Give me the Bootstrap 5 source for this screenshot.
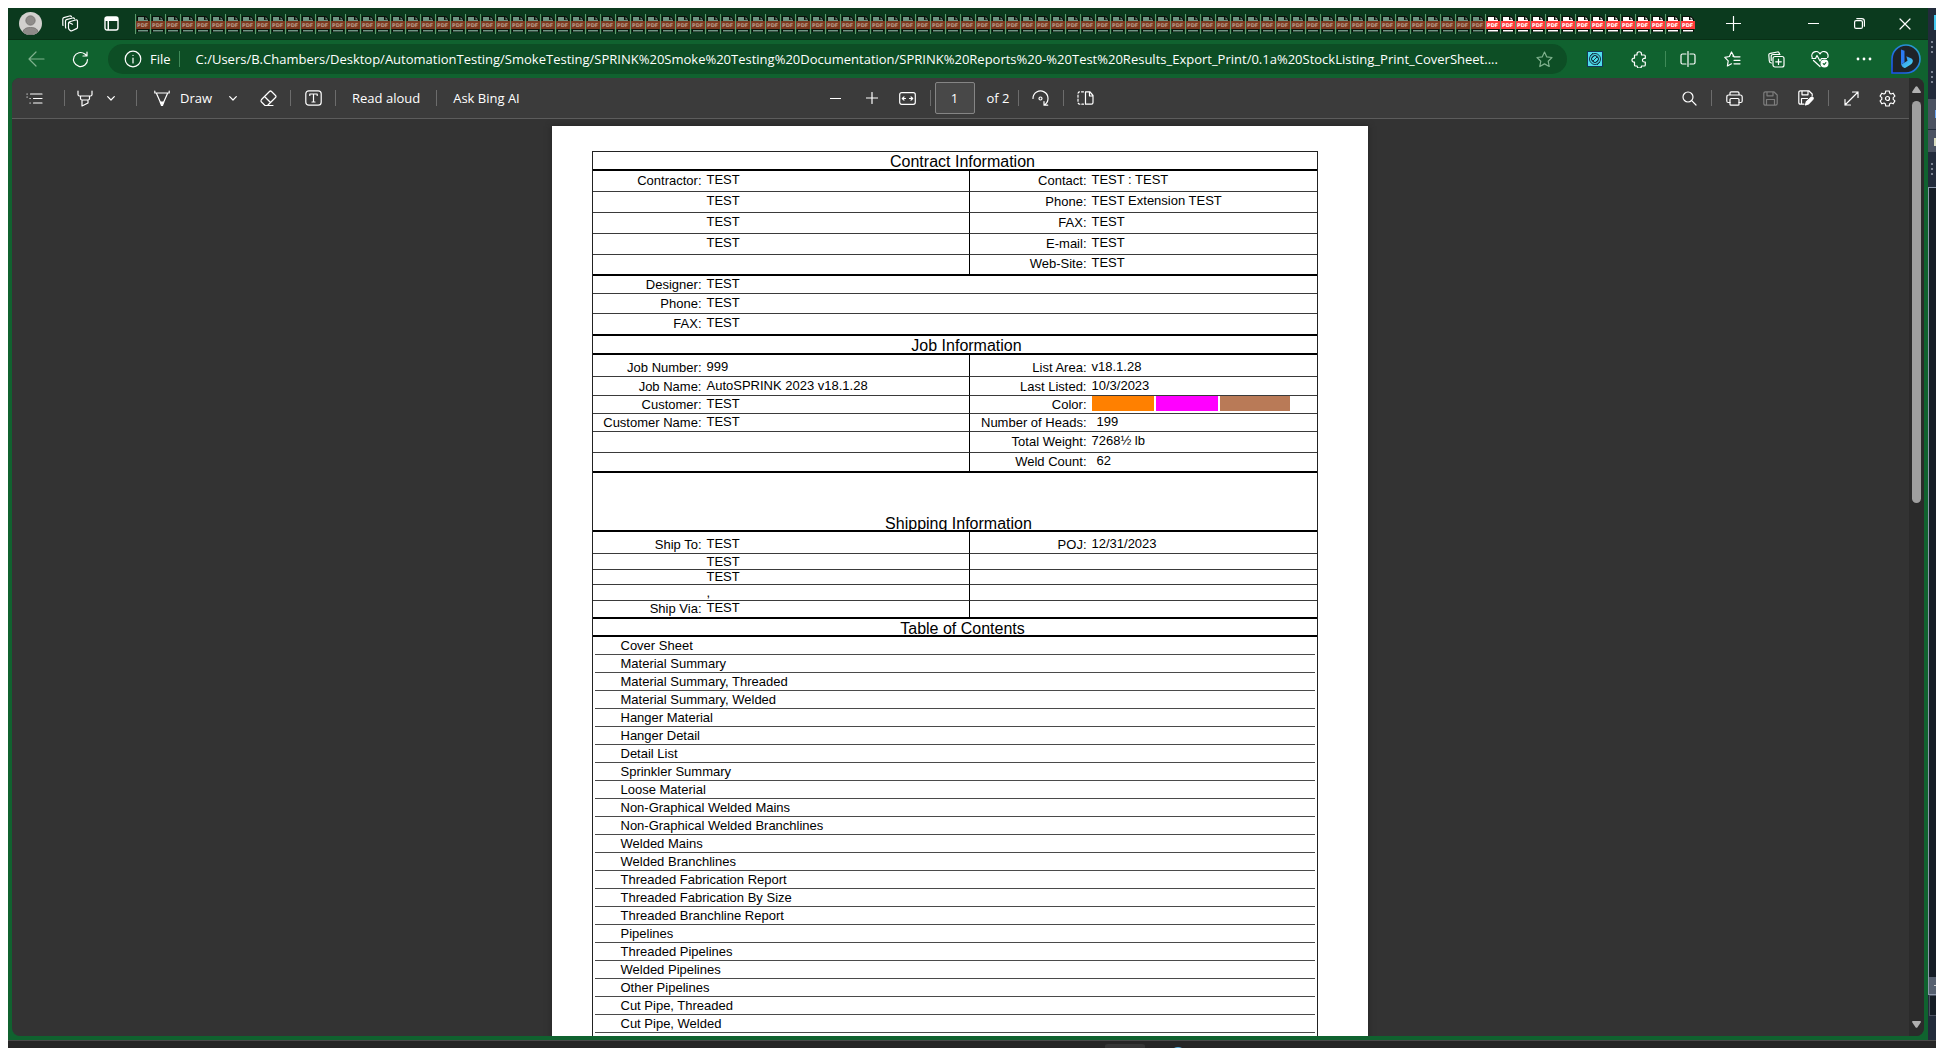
<!DOCTYPE html>
<html lang="en">
<head>
<meta charset="utf-8">
<meta name="viewport" content="width=device-width, initial-scale=1">
<title>StockListing_Print_CoverSheet.pdf</title>
<link href="https://cdn.jsdelivr.net/npm/bootstrap@5.3.0/dist/css/bootstrap.min.css" rel="stylesheet">
<style>
body{background:#fff;font-family:"Open Sans","Noto Sans",sans-serif;font-size:13px;line-height:20px;color:#fff}
button{background:none;border:0;padding:0;color:inherit}
svg{display:block;flex:none}
.ico{fill:none;stroke:currentColor;stroke-width:1.2;stroke-linecap:round;stroke-linejoin:round}
.desk{padding:8px 0 0 8px}
.mainrow,.view,.canvas{min-height:0}
.browser{background:#10622f;min-width:0}
.tabstrip{height:32px;background:#0b3a1e;border-bottom:1px solid #083016}
.w26,.w36,.w40,.w44,.w46,.w76{display:flex;align-items:center;justify-content:center;flex:none;height:100%}
.w26{width:26px}.w36{width:36px}.w40{width:40px}.w44{width:44px}.w46{width:46px}.w76{width:76px}
.tabs{height:20px;padding-left:1px}
.pdftab{width:15px;height:20px;border-left:1px solid #5f9a6c;--sheet:#6f9684;--band:#7a3820;--ink:#b99a88;flex:none}
.pdftab.live{--sheet:#fff;--band:#ff3b3b;--ink:#fff}
.pdftab text{font:bold 5px "DejaVu Sans",sans-serif;fill:var(--ink)}
.navrow{height:38px;padding:0 2px 0 6px}
.pill{height:30px;border-radius:15px;background:#0d4e25;margin:0 6px;min-width:0}
.addr{background:none;border:0;outline:0;color:#fff;font-size:13px;padding:0;min-width:0;text-overflow:ellipsis}
.bar{width:1px;height:16px;background:#3f8a58;flex:none}
.dim{color:#7fb18d}
.faded{color:#7d7d7d}
.view{margin:0 4px 4px;border-radius:8px;background:#333}
.pane{min-width:0}
.tools{height:41px;background:#3b3b3b;border-bottom:1px solid #5c5c5c}
.sep{width:9px;flex:none;display:flex;justify-content:center}
.sep::before{content:"";width:1px;height:16px;background:#6c6c6c}
.wide{width:16px}
.txtbtn{padding:0 12px;height:100%;white-space:nowrap}
.side{flex:1 1 0;min-width:0}
.pgno{width:40px;height:32px;background:#484848;border:1px solid #858585;border-radius:2px;color:#fff;text-align:center;padding:0}
.scroll{width:15px;background:#2b2b2b;padding:8px 0}
.thumb{width:9px;height:402px;border-radius:5px;background:#9f9f9f;margin-top:8px}
.canvas{padding:7px 2px 0 0}
.sheet{width:816px;max-width:100%;min-height:1056px;background:#fff;color:#000;padding:25px 50px 0 40px;font-family:"Liberation Sans",sans-serif;font-size:13px;line-height:12px;flex:none;box-shadow:0 0 6px #222}
.frame{border:1px solid #222;border-bottom:0;min-height:1000px}
.sheet h2{font-size:16px;line-height:19px;font-weight:400;text-align:center;margin:0;border-bottom:2px solid #000;height:19px}
.sheet h2.gaptop{height:59px;padding-top:41px}
.sheet h2.tocpad{height:18px}
.form{width:100%;table-layout:fixed;border-collapse:separate;border-spacing:0}
.form th,.form td{padding:0;vertical-align:bottom;border-bottom:1px solid #3a3a3a;font-weight:400;white-space:nowrap}
.form th{text-align:right;padding:0 3px var(--drop) 0}
.form td{padding:0 0 calc(var(--drop) + 1px) 2px}
.form td.cut{border-right:1px solid #000}
.form td.num{padding-left:7px}
.form tr:last-child>*{border-bottom:2px solid #000}
.c1{width:112px}.c2{width:265px}.c3{width:120px}
.r15{height:15px;--drop:0px}.r16{height:16px;--drop:0px}.r18{height:18px;--drop:2px}.r19{height:19px;--drop:2px}
.r20{height:20px;--drop:3px}.r21{height:21px;--drop:4px}.r22{height:22px;--drop:2px}.high{--drop:4px}
.form .colors{padding-bottom:2px;line-height:0}
.swatches{gap:2px}
.sw{height:15px;width:62px}
.sw.last{width:70px}
.toc{list-style:none;margin:0 2px;padding:0}
.toc li{height:18px;border-bottom:1px solid #4a4a4a;padding:2px 0 0 26px;line-height:13px}
.strip{width:8px;background:#222b3b}
.task{height:8px;background:#262626;border-top:1px solid #4a4a4a}
</style>
</head>
<body>
<div class="desk vh-100 d-flex flex-column overflow-hidden">
<div class="mainrow d-flex flex-grow-1">
<main class="browser d-flex flex-column flex-grow-1">
  <header class="tabstrip d-flex align-items-center flex-shrink-0">
    <button class="w44" aria-label="Profile"><svg width="23" height="23" viewBox="0 0 23 23"><defs><clipPath id="av"><circle cx="11.5" cy="11.5" r="11.5"/></clipPath></defs><g clip-path="url(#av)"><rect width="23" height="23" fill="#d2d0ce"/><circle cx="11.5" cy="8.5" r="4.7" fill="#8e8b89" stroke="#6f6c6a" stroke-width=".7"/><path d="M3.5 23c0-6 3-7.500 8-7.500s8 1.500 8 7.500z" fill="#8e8b89" stroke="#6f6c6a" stroke-width=".7"/></g></svg></button>
    <button class="w36" aria-label="Workspaces"><svg class="ico" width="17" height="17" viewBox="0 0 17 17"><path d="M6.500 8.200Q6.500 7 7.500 6.700L13.500 5q1.800-.4 2 1.200v6q0 1-1 1.400l-4.500 2.200q-1 .4-1.800-.3-1.700-1.300-1.700-2.500zM7 7.500l3.500 1.700M3.800 13Q3.500 12.500 3.500 11.500V6q0-1 1-1.400L10.500 3q1.500-.3 2 .8M1 10.500Q.8 10 .8 9V4q0-1 1-1.400L7.500 1q1.500-.3 2 .6"/></svg></button>
    <button class="w46" aria-label="Tab actions"><svg width="15" height="15" viewBox="0 0 15 15"><rect x="1" y="1" width="13" height="13" rx="2" fill="none" stroke="#fff" stroke-width="1.4"/><path d="M1 2.500Q1 1 2.500 1h10Q14 1 14 2.500V5H5v9H3.500V5H1z" fill="#fff"/></svg></button>
    <div class="tabs d-flex" id="tabs" role="tablist"></div>
    <button class="w76" aria-label="New tab"><svg class="ico" width="15" height="15" viewBox="0 0 15 15"><path d="M7.500 .5v14M.5 7.500h14"/></svg></button>
    <div class="d-flex h-100 ms-auto">
      <button class="w46" aria-label="Minimize"><svg class="ico" width="11" height="11" viewBox="0 0 11 11"><path d="M.5 5.500h10"/></svg></button>
      <button class="w46" aria-label="Restore"><svg class="ico" width="11" height="11" viewBox="0 0 11 11"><rect x=".6" y="2.600" width="7.800" height="7.800" rx="1.500"/><path d="M2.800 .6h5q2.600 0 2.600 2.600v5"/></svg></button>
      <button class="w46" aria-label="Close"><svg class="ico" width="12" height="12" viewBox="0 0 12 12"><path d="M1 1l10 10M11 1 1 11"/></svg></button>
    </div>
  </header>
  <nav class="navrow d-flex align-items-center flex-shrink-0" aria-label="Address bar">
    <button class="w44 dim" aria-label="Back"><svg class="ico" width="17" height="16" viewBox="0 0 17 16"><path d="M16 8H1M8 1 1 8l7 7"/></svg></button>
    <button class="w44" aria-label="Refresh"><svg class="ico" width="17" height="17" viewBox="0 0 17 17"><path d="M15.500 8.500A7 7 0 1 1 12.800 3L15 4.800M15 1v4h-4"/></svg></button>
    <div class="pill d-flex align-items-center flex-grow-1">
      <svg class="ico ms-3 me-2" width="18" height="18" viewBox="0 0 18 18"><circle cx="9" cy="9" r="7.800"/><path d="M9 8v5M9 5.300v.2"/></svg>
      <label for="addr">File</label>
      <span class="bar ms-2 me-2"></span>
      <input id="addr" class="addr flex-grow-1 ms-1 ps-1" value="C:/Users/B.Chambers/Desktop/AutomationTesting/SmokeTesting/SPRINK%20Smoke%20Testing%20Documentation/SPRINK%20Reports%20-%20Test%20Results_Export_Print/0.1a%20StockListing_Print_CoverSheet....">
      <button class="w46 dim" aria-label="Add to favorites"><svg class="ico" width="17" height="17" viewBox="0 0 17 17"><path d="M8.500 1l2.300 4.900 5.200.6-3.800 3.700 1 5.300-4.700-2.600-4.700 2.600 1-5.300L1 6.500l5.200-.6z"/></svg></button>
    </div>
    <button class="w44" aria-label="Extension"><svg width="16" height="16" viewBox="0 0 16 16"><rect x=".5" y=".5" width="15" height="15" fill="#4fdcec" stroke="#123a5a"/><g fill="none" stroke="#14384a"><circle cx="8" cy="8" r="5.500"/><circle cx="8" cy="8" r="3.500"/><path d="M4 8l4-4 4 4-4 4zM6 10l4-4M3 5l3-3M10 14l3-3"/></g></svg></button>
    <button class="w44" aria-label="Extensions"><svg class="ico" width="16" height="17" viewBox="0 0 16 17"><path d="M3.500 4H6V3a2 2 0 0 1 4.500 0v1h2.800q1 0 1 1v2.300h-1a1.700 1.700 0 0 0 0 3.700h1v3q0 1-1 1h-2.800a2 2 0 0 1-4.400 0H4.500q-1 0-1-1v-2.800H3a2 2 0 0 1 0-4h.5z"/></svg></button>
    <span class="bar ms-1"></span>
    <button class="w44" aria-label="Split screen"><svg class="ico" width="16" height="16" viewBox="0 0 16 16"><path d="M8 .5v15M6 3H2.500Q1 3 1 4.500v7Q1 13 2.500 13H6M10 3h3.500Q15 3 15 4.500v7q0 1.500-1.500 1.500H10"/></svg></button>
    <button class="w44" aria-label="Favorites"><svg class="ico" width="17" height="17" viewBox="0 0 17 17"><path d="M10 5.500 7.500 1 5.400 5.500.8 6.300l3.400 3.500-.8 5.200 4.100-2.200M10 5.800h6M10 9.300h6M10 12.800h6M10 5.800 8.800 5"/></svg></button>
    <button class="w44" aria-label="Collections"><svg class="ico" width="17" height="17" viewBox="0 0 17 17"><rect x="5" y="5.500" width="11" height="10.500" rx="2"/><path d="M10.500 8v5.500M7.700 10.800h5.600M3.500 12Q1.500 12 1.300 10L.8 4Q.7 2.500 2.300 2.300L9.500 1Q11 .8 11.300 2.300l.3 1M3.200 9.500V5.500q0-2 2-2H12"/></svg></button>
    <button class="w44" aria-label="Browser essentials"><svg class="ico" width="18" height="17" viewBox="0 0 18 17"><path d="M1.200 6.500A4 4 0 0 1 9 3a4 4 0 0 1 7.700 3.500M2.500 9.500 9 15.500M1 7.500h3.500L6 4.500l3 5.500 1.500-2.500h5"/><circle cx="13.500" cy="12.500" r="3.400" fill="#fff"/><path d="M12.200 12.600l1 1 1.700-2" stroke="#10622f"/></svg></button>
    <button class="w44" aria-label="Settings and more"><svg width="16" height="4" viewBox="0 0 16 4" fill="#fff"><circle cx="2" cy="2" r="1.400"/><circle cx="8" cy="2" r="1.400"/><circle cx="14" cy="2" r="1.400"/></svg></button>
    <button class="w40" aria-label="Bing"><svg width="30" height="30" viewBox="0 0 30 30"><defs><linearGradient id="bg" x1="0" y1="1" x2="1" y2="0"><stop offset="0" stop-color="#1b4ff0"/><stop offset="1" stop-color="#2aa7c9"/></linearGradient><linearGradient id="bb" x1="0" y1="0" x2="1" y2="1"><stop offset="0" stop-color="#2b7bf3"/><stop offset="1" stop-color="#4fe3ee"/></linearGradient></defs><path d="M1 29V15A14 14 0 1 1 15 29z" fill="#1f2328" stroke="url(#bg)" stroke-width="1.600"/><path d="M10 5.500l3.500 1.300v11.500L10 20.500z" fill="#2b7bf3"/><path d="M10 20.500l4-2.300 2.500-1.400-1.200-4.600 5.200 2.200q2 1 1.200 3.700-.8 2-2.700 3l-4.500 2.700q-2.500 1-4.500-3.300z" fill="url(#bb)"/></svg></button>
  </nav>
  <section class="view d-flex flex-grow-1 overflow-hidden">
    <div class="pane d-flex flex-column flex-grow-1">
      <div class="tools d-flex align-items-center flex-shrink-0" role="toolbar" aria-label="PDF tools">
        <div class="side d-flex align-items-center h-100">
          <button class="w44" aria-label="Contents"><svg class="ico" width="17" height="13" viewBox="0 0 17 13"><path d="M4.500 2H16M7.500 6.500H16M7.500 11H16M1 2h.2M1 5h.2M4 6.500h.2M4 11h.2"/></svg></button>
          <span class="sep wide"></span>
          <button class="w26" aria-label="Highlight"><svg class="ico" width="16" height="17" viewBox="0 0 16 17"><path d="M1 1v3.500Q1 6 2.500 6h11Q15 6 15 4.500V1M3.500 6v2.500q0 1.500 1.500 1.500h6q1.500 0 1.500-1.500V6M5 10v6l6-3v-3"/></svg></button>
          <button class="w26" aria-label="Highlight options"><svg class="ico" width="8" height="5" viewBox="0 0 8 5"><path d="M.7.7 4 4 7.300.7"/></svg></button>
          <span class="sep wide ms-1"></span>
          <button class="w36" aria-label="Pen"><svg class="ico" width="16" height="17" viewBox="0 0 16 17"><path d="M.8 1v2h14.400V1M2.500 3.500 6.700 13M13.500 3.500 9.300 13"/><path d="M6.300 12h3.400L8.500 15.500h-1z" fill="#fff"/></svg></button>
          <button class="ps-0 pe-2 h-100">Draw</button>
          <button class="w26" aria-label="Draw options"><svg class="ico" width="8" height="5" viewBox="0 0 8 5"><path d="M.7.7 4 4 7.300.7"/></svg></button>
          <button class="w36 ms-1" aria-label="Erase"><svg class="ico" width="17" height="17" viewBox="0 0 17 17"><path d="M1.500 9.500 9.500 1.500q1-1 2 0l4 4q1 1 0 2l-8 8H5l-3.500-3.500q-1-1 0-2.500zM4.500 6.500l6 6M7.500 15.500H13"/></svg></button>
          <span class="sep"></span>
          <button class="w36" aria-label="Add text"><svg class="ico" width="17" height="16" viewBox="0 0 17 16"><rect x=".8" y=".8" width="15.400" height="14.400" rx="3"/><path d="M4.800 5.500V4h7.400v1.500M8.500 4v8M7 12h3"/></svg></button>
          <span class="sep"></span>
          <button class="txtbtn">Read aloud</button>
          <span class="sep"></span>
          <button class="txtbtn">Ask Bing AI</button>
        </div>
        <div class="d-flex align-items-center h-100 ps-1">
          <button class="w36" aria-label="Zoom out"><svg class="ico" width="11" height="11" viewBox="0 0 11 11"><path d="M.5 5.500h10"/></svg></button>
          <button class="w36" aria-label="Zoom in"><svg class="ico" width="12" height="12" viewBox="0 0 12 12"><path d="M6 .5v11M.5 6h11"/></svg></button>
          <button class="w36" aria-label="Fit to width"><svg class="ico" width="17" height="13" viewBox="0 0 17 13"><rect x=".7" y=".7" width="15.600" height="11.600" rx="2"/><path d="M3.500 6.500h3M13.500 6.500h-3M5 4.800 3.300 6.500 5 8.200M12 4.800l1.700 1.700L12 8.200"/></svg></button>
          <span class="sep"></span>
          <input class="pgno" id="pg" value="1"><label for="pg" class="ps-2 ms-1">of 2</label>
          <span class="sep ms-1"></span>
          <button class="w36" aria-label="Rotate"><svg class="ico" width="17" height="17" viewBox="0 0 17 17"><path d="M1 8.500A7.500 7.500 0 1 1 12.500 14.800M12 11.500v3.700h3.700"/><circle cx="8.500" cy="8.500" r="1.500"/></svg></button>
          <span class="sep"></span>
          <button class="w36" aria-label="Page view"><svg class="ico" width="17" height="14" viewBox="0 0 17 14"><path d="M8.500.8H13L16 4.500v7q0 1.700-1.500 1.700H8.500zM12.500 1v4H16"/><path d="M6.500.8H3Q1 .8 1 3v8q0 2.200 2 2.200h3.500" stroke-dasharray="2 2"/></svg></button>
        </div>
        <div class="side d-flex align-items-center justify-content-end h-100 pe-1">
          <button class="w36" aria-label="Search"><svg class="ico" width="15" height="15" viewBox="0 0 15 15"><circle cx="6" cy="6" r="5"/><path d="M9.700 9.700 14 14"/></svg></button>
          <span class="sep"></span>
          <button class="w36" aria-label="Print"><svg class="ico" width="17" height="15" viewBox="0 0 17 15"><path d="M4 4V2Q4 .8 5.200.8h6.600Q13 .8 13 2v2M4 11.500H2.300Q.8 11.500.8 10V6q0-2 2-2h11.400q2 0 2 2v4q0 1.500-1.500 1.500H13"/><rect x="4" y="7.500" width="9" height="6.700" rx="1"/></svg></button>
          <button class="w36 faded" aria-label="Save"><svg class="ico" width="15" height="15" viewBox="0 0 15 15"><path d="M2.500.8h8.300L14.200 4v8.500q0 1.700-1.700 1.700h-10Q.8 14.200.8 12.500v-10Q.8.8 2.500.8zM4 .8v4h6v-4M3.500 14V8.500h8V14"/></svg></button>
          <button class="w36" aria-label="Save as"><svg class="ico" width="16" height="16" viewBox="0 0 16 16"><path d="M6 14.200H2.500Q.8 14.200.8 12.500v-10Q.8.8 2.500.8h8.300L14.200 4v2M4 .8v4h6v-4M3.500 14V8.500h6"/><path d="M7.500 15l.8-3L13 7.500q1-.8 1.800 0t0 1.800L10.300 14z" fill="#fff"/></svg></button>
          <span class="sep"></span>
          <button class="w36" aria-label="Full screen"><svg class="ico" width="15" height="15" viewBox="0 0 15 15"><path d="M1 14 14 1M8.500 1H14v5.500M1 8.500V14h5.500"/></svg></button>
          <button class="w36" aria-label="Settings"><svg class="ico" width="17" height="17" viewBox="0 0 17 17"><path d="M6.800 1h3.400l.5 2.200 1.300.8 2.200-.8 1.700 2.900-1.700 1.500v1.800l1.700 1.500-1.700 2.900-2.200-.8-1.300.8-.5 2.200H6.800l-.5-2.200-1.300-.8-2.200.8-1.700-2.900 1.700-1.500V7.600L1.100 6.100l1.700-2.900L5 4l1.300-.8z"/><circle cx="8.500" cy="8.500" r="2"/></svg></button>
        </div>
      </div>
      <div class="canvas d-flex justify-content-center flex-grow-1 overflow-hidden">
        <article class="sheet"><div class="frame">
          <h2 class="ps-3">Contract Information</h2>
          <table class="form" aria-label="Contract Information">
            <colgroup><col class="c1"><col class="c2"><col class="c3"><col></colgroup>
            <tr class="r21"><th>Contractor:</th><td class="cut">TEST</td><th>Contact:</th><td>TEST : TEST</td></tr>
            <tr class="r21"><th></th><td class="cut">TEST</td><th>Phone:</th><td>TEST Extension TEST</td></tr>
            <tr class="r21"><th></th><td class="cut">TEST</td><th>FAX:</th><td>TEST</td></tr>
            <tr class="r21"><th></th><td class="cut">TEST</td><th>E-mail:</th><td>TEST</td></tr>
            <tr class="r21"><th></th><td class="cut"></td><th>Web-Site:</th><td>TEST</td></tr>
          </table>
          <table class="form" aria-label="Designer">
            <colgroup><col class="c1"><col></colgroup>
            <tr class="r18"><th>Designer:</th><td>TEST</td></tr>
            <tr class="r20"><th>Phone:</th><td>TEST</td></tr>
            <tr class="r22 high"><th>FAX:</th><td>TEST</td></tr>
          </table>
          <h2 class="ps-4">Job Information</h2>
          <table class="form" aria-label="Job Information">
            <colgroup><col class="c1"><col class="c2"><col class="c3"><col></colgroup>
            <tr class="r22"><th>Job Number:</th><td class="cut">999</td><th>List Area:</th><td>v18.1.28</td></tr>
            <tr class="r19"><th>Job Name:</th><td class="cut">AutoSPRINK 2023 v18.1.28</td><th>Last Listed:</th><td>10/3/2023</td></tr>
            <tr class="r18"><th>Customer:</th><td class="cut">TEST</td><th>Color:</th><td class="colors"><span class="swatches d-flex"><span class="sw" style="background:#ff8000"></span><span class="sw" style="background:#f0f"></span><span class="sw last" style="background:#b97a57"></span></span></td></tr>
            <tr class="r18"><th>Customer Name:</th><td class="cut">TEST</td><th>Number of Heads:</th><td class="num">199</td></tr>
            <tr class="r21"><th></th><td class="cut"></td><th>Total Weight:</th><td>7268½ lb</td></tr>
            <tr class="r20"><th></th><td class="cut"></td><th>Weld Count:</th><td class="num">62</td></tr>
          </table>
          <h2 class="gaptop ps-2">Shipping Information</h2>
          <table class="form" aria-label="Shipping Information">
            <colgroup><col class="c1"><col class="c2"><col class="c3"><col></colgroup>
            <tr class="r22"><th>Ship To:</th><td class="cut">TEST</td><th>POJ:</th><td>12/31/2023</td></tr>
            <tr class="r16"><th></th><td class="cut">TEST</td><th></th><td></td></tr>
            <tr class="r15"><th></th><td class="cut">TEST</td><th></th><td></td></tr>
            <tr class="r16"><th></th><td class="cut">,</td><th></th><td></td></tr>
            <tr class="r18"><th>Ship Via:</th><td class="cut">TEST</td><th></th><td></td></tr>
          </table>
          <h2 class="tocpad ps-3">Table of Contents</h2>
          <ul class="toc">
            <li>Cover Sheet</li><li>Material Summary</li><li>Material Summary, Threaded</li><li>Material Summary, Welded</li><li>Hanger Material</li><li>Hanger Detail</li><li>Detail List</li><li>Sprinkler Summary</li><li>Loose Material</li><li>Non-Graphical Welded Mains</li><li>Non-Graphical Welded Branchlines</li><li>Welded Mains</li><li>Welded Branchlines</li><li>Threaded Fabrication Report</li><li>Threaded Fabrication By Size</li><li>Threaded Branchline Report</li><li>Pipelines</li><li>Threaded Pipelines</li><li>Welded Pipelines</li><li>Other Pipelines</li><li>Cut Pipe, Threaded</li><li>Cut Pipe, Welded</li>
          </ul>
        </div></article>
      </div>
    </div>
    <div class="scroll d-flex flex-column align-items-center flex-shrink-0">
      <svg width="9" height="7" viewBox="0 0 9 7" fill="#b0b0b0"><path d="M3.500.8q1-1 2 0L9 6q0 1-1 1H1Q0 7 0 6z"/></svg>
      <div class="thumb"></div>
      <svg class="mt-auto" width="9" height="7" viewBox="0 0 9 7" fill="#b0b0b0"><path d="M3.500 6.200q1 1 2 0L9 1q0-1-1-1H1Q0 0 0 1z"/></svg>
    </div>
  </section>
</main>
<aside class="strip flex-shrink-0" aria-hidden="true"><svg width="8" height="1032" viewBox="0 0 8 1032"><path d="M0 91h8v53H0z" fill="#4b5261"/><path d="M0 121h8v1H0z" fill="#222b3b"/><path d="M0 179h8v808H0z" fill="#8d98ab"/><path d="M1 180h7v789H1z" fill="#151d26"/><path d="M1 969h7v17H1z" fill="#566070"/><path d="M1 987h7v21H1z" fill="#4b5261"/><path d="M2 988h6v19H2z" fill="#151d26"/><path d="M6 7h2v15H6z" fill="#45c8f0"/><path d="M7 102h1v8H7z" fill="#6aa5f5"/><path d="M6 130h2v8H6z" fill="#d9dcc0"/><path d="M6 977h2v1H6z" fill="#ccc"/><g stroke="#7b8391" stroke-width="2" stroke-dasharray="2 3"><path d="M4 33v15M4 63v15M4 155v14"/></g></svg></aside>
</div>
<footer class="task flex-shrink-0"><svg class="w-100" height="7" viewBox="0 0 1928 7" preserveAspectRatio="none"><path d="M1097 7V5q0-2 3-2h34q3 0 3 2v2z" fill="#363636"/><path d="M1166 7q4-2 8 0z" fill="#5fb4e0"/></svg></footer>
</div>
<script>
var tabs = document.getElementById('tabs');
for (var i = 0; i < 104; i++) {
  var b = document.createElement('button');
  b.className = 'pdftab' + (i > 89 ? ' live' : '');
  b.setAttribute('role', 'tab');
  b.innerHTML = '<svg width="14" height="20" viewBox="0 0 14 20"><path d="M1 2h9l3 3v13H1z" fill="#0a0f0a"/><path d="M2 3h6v3h4v1H2zM2 16h10v1.500H2z" fill="var(--sheet)"/><path d="M9.500 3 12 5.500H9.500z" fill="var(--sheet)"/><path d="M0 7h14v8H0z" fill="var(--band)"/><text x="1" y="13">PDF</text></svg>';
  b.setAttribute('aria-label', 'PDF tab ' + (i + 1));
  tabs.appendChild(b);
}
</script>
<script src="https://cdn.jsdelivr.net/npm/bootstrap@5.3.0/dist/js/bootstrap.bundle.min.js"></script>
</body>
</html>
